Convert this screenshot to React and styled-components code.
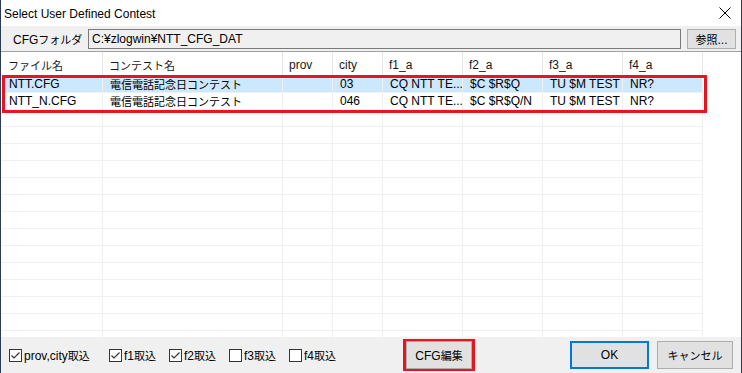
import React from "react";
import styled, { createGlobalStyle } from "styled-components";

const GlobalStyle = createGlobalStyle`
  html, body {
    margin: 0;
    padding: 0;
    background: #f0f0f0;
  }
  * {
    box-sizing: border-box;
  }
`;

const FONT = `"Liberation Sans", "Noto Sans CJK JP", sans-serif`;

const columns = [
  { key: "file", label: "ファイル名", width: 101 },
  { key: "name", label: "コンテスト名", width: 180 },
  { key: "prov", label: "prov", width: 50 },
  { key: "city", label: "city", width: 50 },
  { key: "f1", label: "f1_a", width: 80 },
  { key: "f2", label: "f2_a", width: 80 },
  { key: "f3", label: "f3_a", width: 80 },
  { key: "f4", label: "f4_a", width: 80 },
];

const rows = [
  { file: "NTT.CFG", name: "電信電話記念日コンテスト", prov: "", city: "03", f1: "CQ NTT TE...", f2: "$C $R$Q", f3: "TU $M TEST", f4: "NR?", selected: true },
  { file: "NTT_N.CFG", name: "電信電話記念日コンテスト", prov: "", city: "046", f1: "CQ NTT TE...", f2: "$C $R$Q/N", f3: "TU $M TEST", f4: "NR?" },
];

const checks = [
  { label: "prov,city取込", checked: true, width: 100 },
  { label: "f1取込", checked: true, width: 60 },
  { label: "f2取込", checked: true, width: 60 },
  { label: "f3取込", checked: false, width: 60 },
  { label: "f4取込", checked: false, width: 60 },
];

// Japanese glyphs in the dialog font are a bit narrower than 12px
const Jp = styled.span`
  font-size: 11px;
`;

const Txt = ({ children }) => {
  if (typeof children !== "string") return children ?? null;
  const parts = children.split(/([\u3000-\u9fff\uff00-\uffef]+)/).filter(Boolean);
  return parts.map((p, i) =>
    /[\u3000-\u9fff\uff00-\uffef]/.test(p) ? <Jp key={i}>{p}</Jp> : <React.Fragment key={i}>{p}</React.Fragment>
  );
};

const Window = styled.div`
  width: 742px;
  height: 373px;
  display: flex;
  flex-direction: column;
  background: #f0f0f0;
  border-left: 1px solid #2b3a55;
  border-right: 1px solid #2b3a55;
  font-family: ${FONT};
  font-size: 12px;
  color: #000;
  overflow: hidden;
`;

const TitleBar = styled.div`
  height: 26px;
  flex: none;
  background: #fff;
  display: flex;
  align-items: center;
  justify-content: space-between;
  padding: 0 10px 0 3px;
`;

const Title = styled.span`
  font-size: 12px;
  color: #000;
  padding-top: 1px;
`;

const FolderBar = styled.div`
  height: 25px;
  flex: none;
  display: flex;
  align-items: center;
  padding: 0 5px 0 12px;
`;

const FolderLabel = styled.span`
  width: 75px;
  flex: none;
`;

const PathBox = styled.div`
  width: 595px;
  height: 20px;
  border: 1px solid #7a7a7a;
  background: #f0f0f0;
  display: flex;
  align-items: center;
  padding-left: 3px;
`;

const Button = styled.button`
  font-family: ${FONT};
  font-size: 12px;
  color: #000;
  background: #e1e1e1;
  border: ${({ $default }) => ($default ? "2px solid #0078d7" : "1px solid #adadad")};
  width: ${({ $w }) => $w}px;
  height: ${({ $h }) => $h || 28}px;
  padding: 0;
  margin-left: ${({ $ml }) => $ml || 0}px;
  flex: none;
`;

const ListView = styled.div`
  flex: 1;
  position: relative;
  background: #fff;
  border-top: 1px solid #a0a0a0;
  overflow: hidden;
  padding-left: 1px;
`;

const HeaderRow = styled.div`
  display: flex;
  height: 24px;
`;

const HeaderCell = styled.div`
  width: ${({ $w }) => $w}px;
  flex: none;
  border-right: 1px solid #e5e5e5;
  padding: 1px 0 0 6px;
  display: flex;
  align-items: center;
  color: #1a1a1a;
`;

const Row = styled.div`
  display: flex;
  height: 17px;
`;

const Cell = styled.div`
  width: ${({ $w }) => $w}px;
  flex: none;
  border-right: 1px solid #f0f0f0;
  border-bottom: 1px solid #f0f0f0;
  background: ${({ $sel }) => ($sel ? "#cce8ff" : "#fff")};
  padding-left: 7px;
  display: flex;
  align-items: center;
  white-space: nowrap;
  overflow: hidden;
`;

const RowMark = styled.div`
  position: absolute;
  left: 1px;
  top: 23px;
  width: 705px;
  height: 38px;
  border: 3px solid #e8141e;
  pointer-events: none;
`;

const Footer = styled.div`
  height: 36px;
  flex: none;
  display: flex;
  align-items: center;
  padding: 0 8px;
`;

const CheckItem = styled.label`
  width: ${({ $w }) => $w}px;
  flex: none;
  display: flex;
  align-items: center;
  gap: 2px;
  white-space: nowrap;
`;

const Box = styled.span`
  width: 13px;
  height: 13px;
  border: 1px solid #333;
  background: #fff;
  display: flex;
  align-items: center;
  justify-content: center;
`;

const ButtonMark = styled.div`
  margin-left: 54px;
  border: 3px solid #e8141e;
  display: flex;
  align-items: center;
  justify-content: center;
  width: 72px;
  height: 32px;
  flex: none;
`;

const Spacer = styled.div`
  flex: 1;
`;

const Check = ({ checked }) => (
  <Box>
    {checked && (
      <svg width="11" height="11" viewBox="0 0 11 11">
        <path d="M1.5 5.5 L4 8 L9.5 2.5" fill="none" stroke="#333" strokeWidth="1.2" />
      </svg>
    )}
  </Box>
);

const CloseIcon = () => (
  <svg width="12" height="12" viewBox="0 0 12 12">
    <path d="M0.5 0.5 L11.5 11.5 M11.5 0.5 L0.5 11.5" stroke="#000" strokeWidth="1" />
  </svg>
);

const FILLER = 14;

const App = () => {
  return (
    <>
      <GlobalStyle />
      <Window>
        <TitleBar>
          <Title>Select User Defined Contest</Title>
          <CloseIcon />
        </TitleBar>
        <FolderBar>
          <FolderLabel><Txt>CFGフォルダ</Txt></FolderLabel>
          <PathBox>C:¥zlogwin¥NTT_CFG_DAT</PathBox>
          <Button $w={49} $h={20} $ml={6}><Txt>参照...</Txt></Button>
        </FolderBar>
        <ListView>
          <HeaderRow>
            {columns.map((c) => (
              <HeaderCell key={c.key} $w={c.width}><Txt>{c.label}</Txt></HeaderCell>
            ))}
          </HeaderRow>
          {rows.map((r, i) => (
            <Row key={i}>
              {columns.map((c) => (
                <Cell key={c.key} $w={c.width} $sel={r.selected}><Txt>{r[c.key]}</Txt></Cell>
              ))}
            </Row>
          ))}
          {Array.from({ length: FILLER }).map((_, i) => (
            <Row key={"f" + i}>
              {columns.map((c) => (
                <Cell key={c.key} $w={c.width} />
              ))}
            </Row>
          ))}
          <RowMark />
        </ListView>
        <Footer>
          {checks.map((c) => (
            <CheckItem key={c.label} $w={c.width}>
              <Check checked={c.checked} />
              <span><Txt>{c.label}</Txt></span>
            </CheckItem>
          ))}
          <ButtonMark>
            <Button $w={66}><Txt>CFG編集</Txt></Button>
          </ButtonMark>
          <Spacer />
          <Button $w={79} $default>OK</Button>
          <Button $w={76} $ml={8}><Txt>キャンセル</Txt></Button>
        </Footer>
      </Window>
    </>
  );
};

export default App;
